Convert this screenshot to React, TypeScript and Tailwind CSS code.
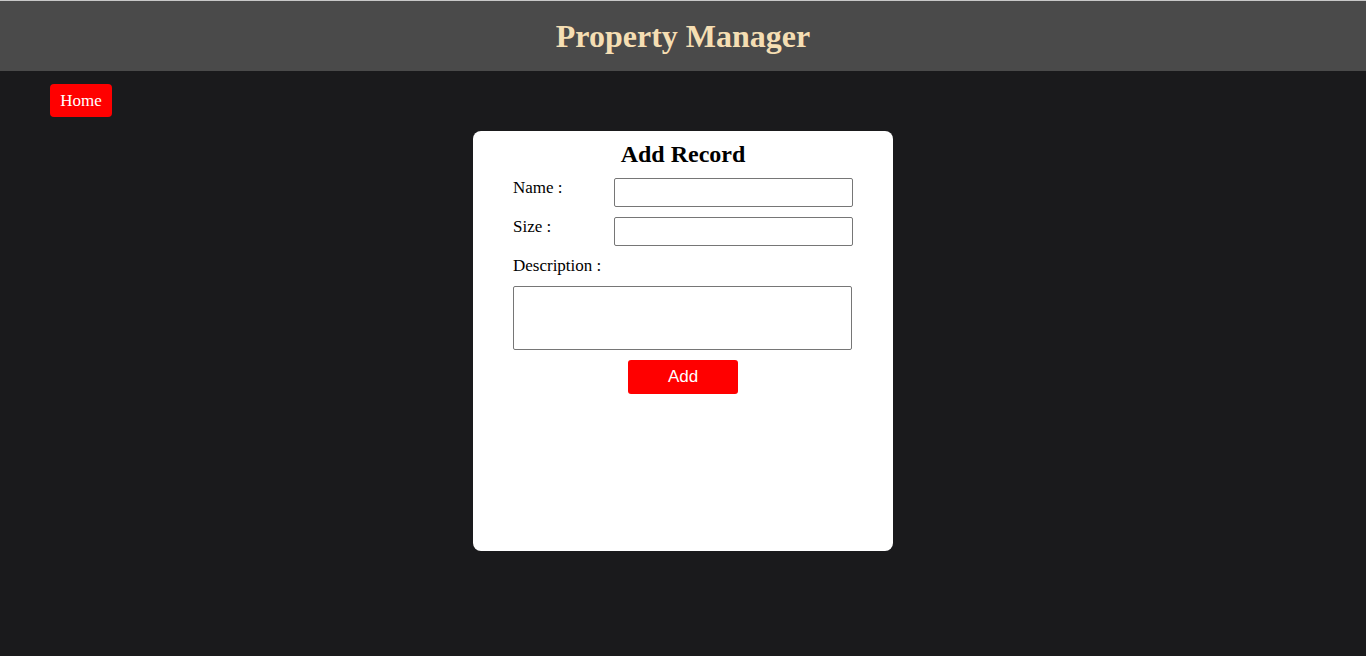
export default function App() {
  return (
    <div className="min-h-[656px] bg-[#1a1a1c] font-['Liberation_Serif',serif]">
      <header className="h-[71px] border-t border-[#c8c8c8] bg-[#4a4a4a] flex items-center justify-center">
        <h1 className="text-[32px] font-bold text-[#f5deb3] leading-none">Property Manager</h1>
      </header>
      <div className="pl-[50px] pt-[13px]">
        <button className="h-[33px] w-[62px] rounded-[4px] bg-[#ff0000] text-white text-[17px]">Home</button>
      </div>
      <div className="flex justify-center pt-[14px]">
        <div className="w-[420px] h-[420px] rounded-[8px] bg-white px-[40px] pt-[11px]">
          <h2 className="text-center text-[24px] font-bold text-black leading-[24px]">Add Record</h2>
          <div className="mt-[12px] flex">
            <label className="w-[101px] text-[17px] text-black leading-[20px]">Name :</label>
            <input className="w-[239px] h-[29px] border border-[#767676] rounded-[2px]" />
          </div>
          <div className="mt-[10px] flex">
            <label className="w-[101px] text-[17px] text-black leading-[20px]">Size :</label>
            <input className="w-[239px] h-[29px] border border-[#767676] rounded-[2px]" />
          </div>
          <div className="mt-[10px] text-[17px] text-black leading-[20px]">Description :</div>
          <textarea className="mt-[10px] block w-[339px] h-[64px] border border-[#767676] rounded-[2px] resize-none" />
          <div className="mt-[10px] flex justify-center">
            <button className="w-[110px] h-[34px] rounded-[3px] bg-[#ff0000] text-white text-[17px] font-['Liberation_Sans',sans-serif]">Add</button>
          </div>
        </div>
      </div>
    </div>
  );
}
